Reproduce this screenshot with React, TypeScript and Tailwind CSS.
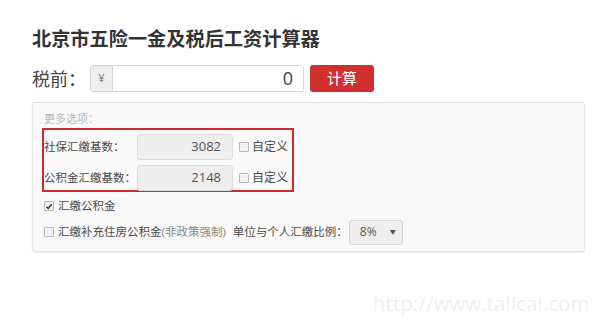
import React from 'react';

const font = "font-['Open_Sans','Noto_Sans_CJK_SC',sans-serif]";

function Check({ checked }: { checked?: boolean }) {
  return (
    <span className="w-[10px] h-[10px] border border-[#b9b9b9] bg-[#f1f1f1] rounded-[1px] flex items-center justify-center shrink-0">
      {checked && (
        <svg viewBox="0 0 10 10" className="w-[9px] h-[9px]">
          <path d="M1.8 5.2 L4 7.4 L8.4 2.2" fill="none" stroke="#333" strokeWidth="1.8" />
        </svg>
      )}
    </span>
  );
}

function BaseRow({ label, value }: { label: string; value: string }) {
  return (
    <div className="flex items-center h-[26px]">
      <span className="w-[93px] whitespace-nowrap text-[11.5px] text-[#4a4a4a] leading-none">{label}</span>
      <div className="w-[96px] h-[26px] bg-[#eeeeee] border border-[#dcdcdc] rounded-[3px] flex items-center justify-end pr-[11px] text-[13px] text-[#555]">
        {value}
      </div>
      <div className="ml-[6px] flex items-center gap-[3px]">
        <Check />
        <span className="text-[12px] text-[#4a4a4a]">自定义</span>
      </div>
    </div>
  );
}

export default function App() {
  return (
    <div className={`w-[600px] h-[327px] bg-white relative overflow-hidden ${font}`}>
      <div className="pl-[32px] pt-[25px]">
        <h1 className="text-[19.2px] font-bold text-[#333] leading-[28px]">北京市五险一金及税后工资计算器</h1>

        <div className="mt-[12px] flex items-center h-[27px]">
          <span className="w-[58px] text-[18px] text-[#444] leading-none">税前：</span>
          <div className="w-[214px] h-[27px] flex border border-[#d5d5d5] rounded-[3px] overflow-hidden">
            <span className="w-[22px] bg-[#eeeeee] border-r border-[#d5d5d5] flex items-center justify-center text-[11px] text-[#666]">¥</span>
            <div className="flex-1 bg-white flex items-center justify-end pr-[10px] text-[18px] text-[#444]">0</div>
          </div>
          <button className="ml-[6px] w-[64px] h-[27px] rounded-[3px] bg-[#d12f2f] text-white text-[15px] leading-none">计算</button>
        </div>

        <div className="mt-[10px] w-[553px] h-[150px] bg-[#f9f9f9] border border-[#e4e4e4] rounded-[3px] shadow-[0_1px_2px_rgba(0,0,0,0.08)] pl-[9px] pt-[9px]">
          <div className="pl-[2px] text-[11px] text-[#bbb] leading-[14px]">更多选项：</div>
          <div className="mt-[2px] w-[252px] h-[64px] border-2 border-[#cc2a30] pt-[4px] flex flex-col gap-[5px]">
            <BaseRow label="社保汇缴基数：" value="3082" />
            <BaseRow label="公积金汇缴基数：" value="2148" />
          </div>

          <div className="mt-[6px] pl-[2px] flex items-center gap-[4px] h-[16px]">
            <Check checked />
            <span className="text-[11.5px] text-[#4a4a4a]">汇缴公积金</span>
          </div>

          <div className="mt-[5px] pl-[2px] flex items-center h-[26px] whitespace-nowrap">
            <Check />
            <span className="ml-[4px] text-[11.5px] text-[#4a4a4a]">
              汇缴补充住房公积金<span className="text-[#888]">(非政策强制)</span>
            </span>
            <span className="ml-[7px] text-[11.5px] text-[#4a4a4a]">单位与个人汇缴比例：</span>
            <div className="ml-[1px] w-[54px] h-[25px] bg-[#eeeeee] border border-[#d8d8d8] rounded-[3px] flex items-center pl-[10px] pr-[6px] text-[12px] text-[#555]">
              <span className="flex-1">8%</span>
              <span className="text-[6px] text-[#555]">▼</span>
            </div>
          </div>
        </div>
      </div>

      <div className="absolute left-[373px] top-[290px] text-[20px] text-[#f0f0f0] font-['Open_Sans',sans-serif] leading-[28px] tracking-[0.3px]">
        http://www.talicai.com
      </div>
    </div>
  );
}
